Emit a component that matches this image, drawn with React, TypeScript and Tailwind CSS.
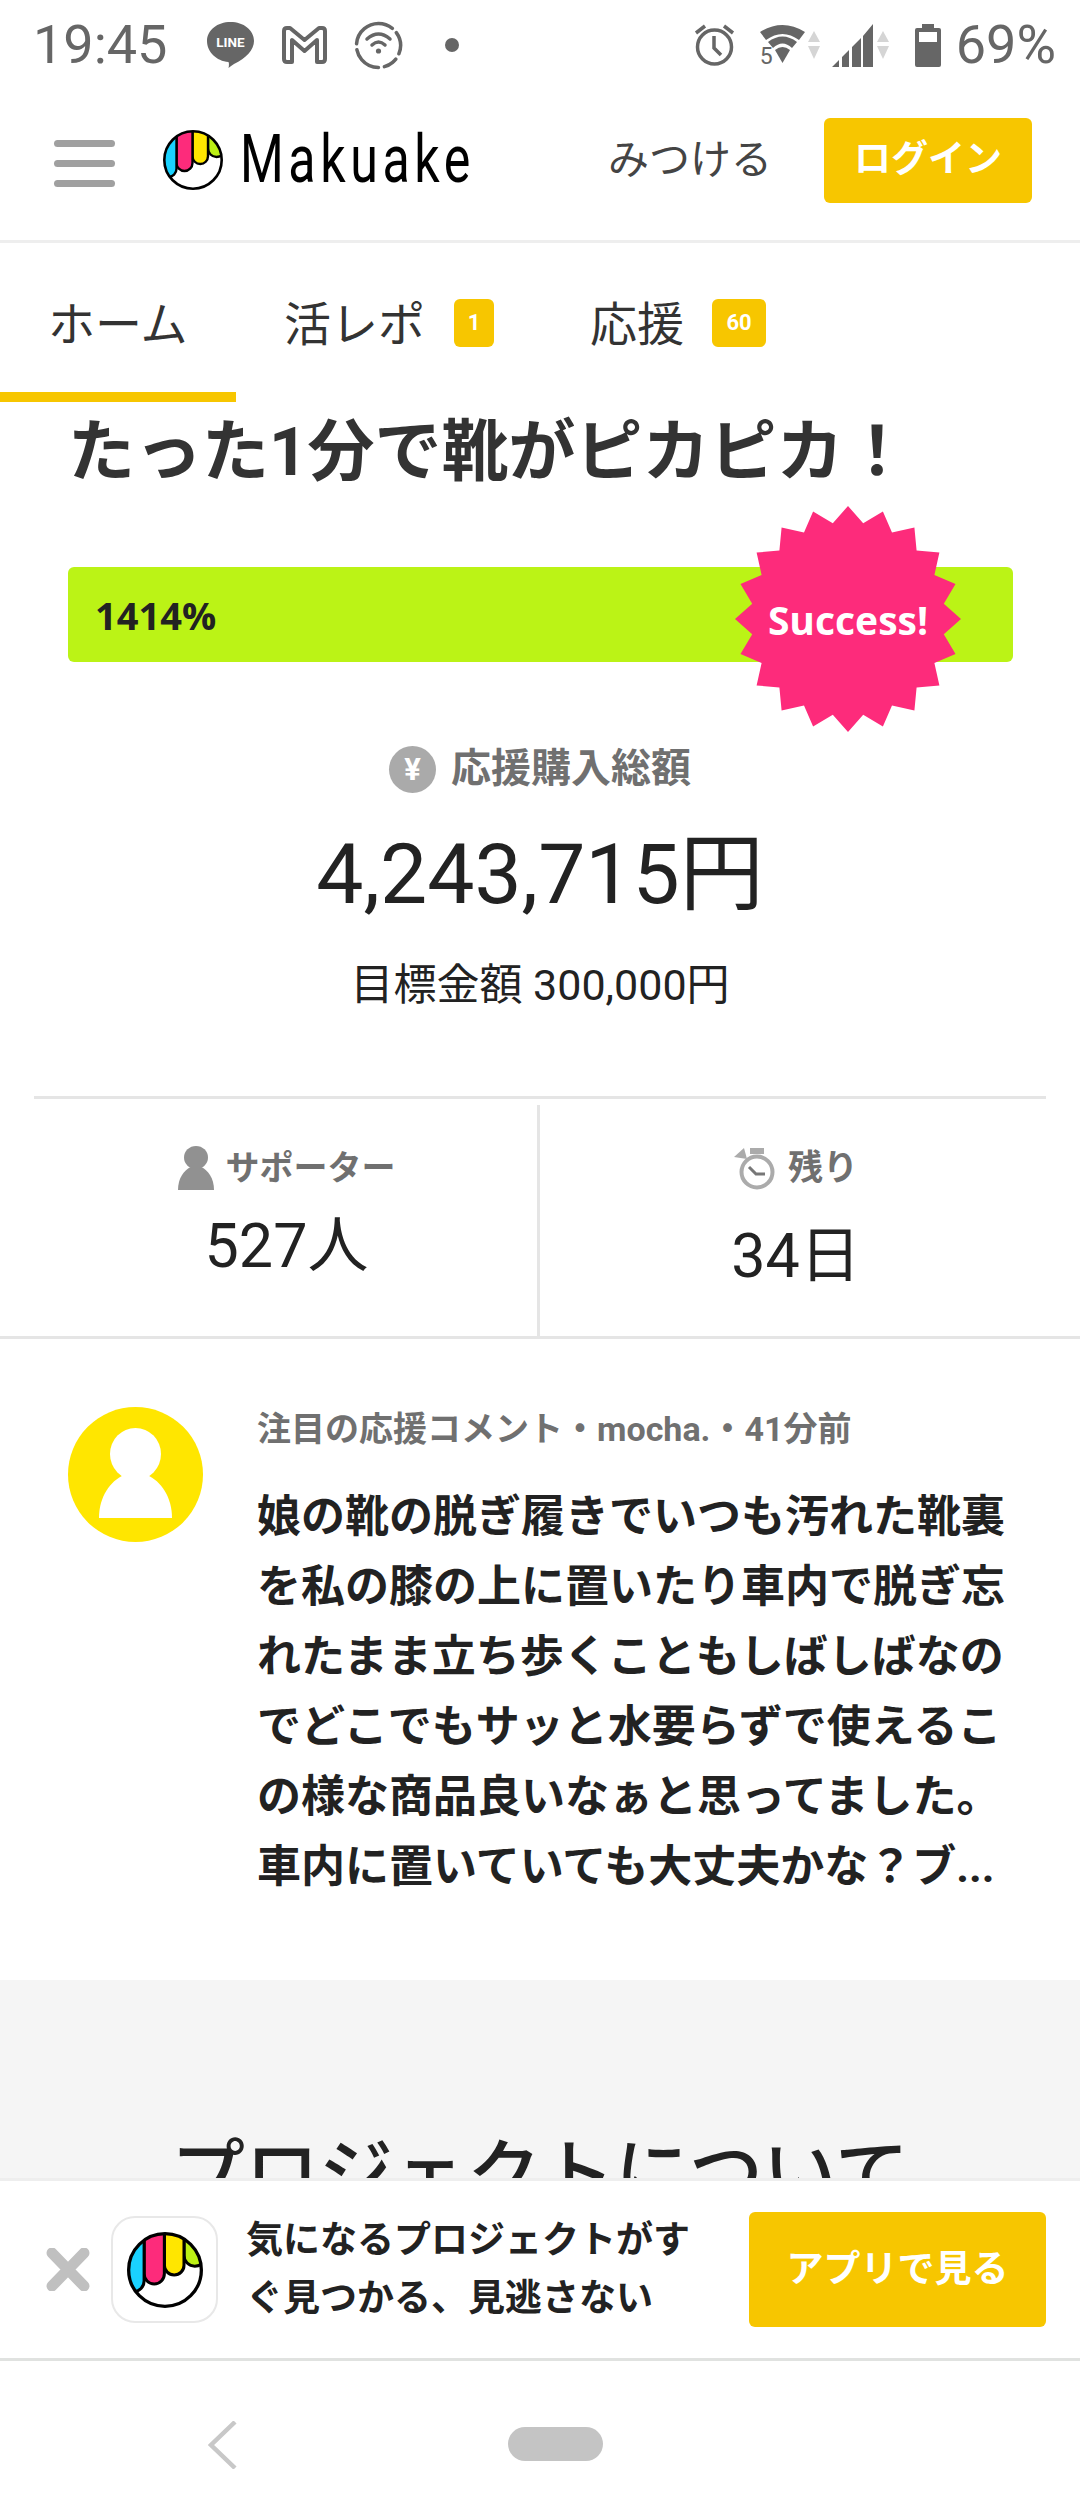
const FONT = 'font-["Roboto","Noto_Sans_CJK_JP",sans-serif]';

// 20-point starburst behind the "Success!" label
function burstPoints(cx: number, cy: number, outer: number, inner: number) {
  const pts: string[] = [];
  for (let i = 0; i < 40; i++) {
    const r = i % 2 === 0 ? outer : inner;
    const a = (i * 9 * Math.PI) / 180;
    pts.push(`${(cx + r * Math.sin(a)).toFixed(1)},${(cy - r * Math.cos(a)).toFixed(1)}`);
  }
  return pts.join(' ');
}

function stripe(x0: number, x1: number, bottom: number) {
  const r = (x1 - x0) / 2;
  return `M${x0} -6 V${bottom - r} A${r} ${r} 0 0 0 ${x1} ${bottom - r} V-6 Z`;
}

function LogoMark({ size, id }: { size: number; id: string }) {
  return (
    <svg width={size} height={size} viewBox="0 0 60 60" className="shrink-0">
      <defs>
        <clipPath id={id}>
          <circle cx="30" cy="30" r="28.5" />
        </clipPath>
      </defs>
      <g clipPath={`url(#${id})`}>
        <circle cx="30" cy="30" r="29" fill="#fff" />
        <path d={stripe(45, 62, 27)} fill="#bcf015" stroke="#000" strokeWidth="2.4" />
        <path d={stripe(29.5, 45, 34)} fill="#ffe600" stroke="#000" strokeWidth="2.4" />
        <path d={stripe(13.5, 29.5, 41)} fill="#fd2b7b" stroke="#000" strokeWidth="2.4" />
        <path d={stripe(-3, 13.5, 47)} fill="#1ad2ff" stroke="#000" strokeWidth="2.4" />
      </g>
      <circle cx="30" cy="30" r="28.7" fill="none" stroke="#000" strokeWidth="2.6" />
    </svg>
  );
}

function StatusLeftIcons() {
  return (
    <>
      <svg width="47" height="46" viewBox="0 0 47 46" className="ml-[44px]">
        <path d="M23.5 0C36.5 0 47 8 47 19c0 9-8 17-20 23-2 1.200-4 2.500-5.500 4 .5-2 .7-4.500 0-6C9.500 39 0 30 0 19 0 8 10.500 0 23.500 0Z" fill="#666" />
        <text x="23.500" y="25" textAnchor="middle" fontSize="13.500" fontWeight="700" fill="#fff" fontFamily="Roboto">LINE</text>
      </svg>
      <svg width="47" height="38" viewBox="0 0 47 38" className="ml-[27px]">
        <path d="M3 5 Q3 2 6 2 H9 L23.500 14 L38 2 H41 Q44 2 44 5 V33 Q44 36 41 36 H36 V14 L23.500 25 L11 14 V36 H6 Q3 36 3 33 Z" fill="none" stroke="#666" strokeWidth="4" strokeLinejoin="round" />
      </svg>
      <svg width="49" height="49" viewBox="0 0 49 49" className="ml-[26px]">
        <circle cx="24.500" cy="24.500" r="22" fill="none" stroke="#666" strokeWidth="3.500" strokeDasharray="30 6 22 6 14 6 30 6" strokeLinecap="round" transform="rotate(-130 24.500 24.500)" />
        <path d="M13 18 Q24.500 8 36 18" fill="none" stroke="#666" strokeWidth="3.500" strokeLinecap="round" />
        <path d="M18 24 Q24.500 18 31 24" fill="none" stroke="#666" strokeWidth="3.500" strokeLinecap="round" />
        <circle cx="24.500" cy="30" r="2.600" fill="#666" />
      </svg>
      <span className="ml-[42px] h-[14px] w-[14px] rounded-full bg-[#666]" />
    </>
  );
}

function Arrows({ className }: { className: string }) {
  return (
    <svg width="12" height="28" viewBox="0 0 12 28" className={className}>
      <path d="M6 0 L12 11 H0 Z" fill="#d5d5d5" />
      <path d="M0 15 H12 L6 28 Z" fill="#d5d5d5" />
    </svg>
  );
}

function StatusRightIcons() {
  return (
    <>
      <svg width="41" height="42" viewBox="0 0 41 42">
        <circle cx="20.500" cy="23" r="17" fill="none" stroke="#666" strokeWidth="3.500" />
        <path d="M20 12 V24 L27 31" fill="none" stroke="#666" strokeWidth="3.500" />
        <path d="M2 9 L11 2 M39 9 L30 2" stroke="#666" strokeWidth="3.500" />
      </svg>
      <div className="relative ml-[25px] h-[42px] w-[45px]">
        <svg width="45" height="40" viewBox="0 0 45 40" className="absolute left-0 top-0">
          <path d="M0 8 Q22.500 -6 45 8 L39 16 Q22.500 4 6 16 Z" fill="#666" />
          <path d="M8 18 Q22.500 7 37 18 L32 24 Q22.500 15 13 24 Z" fill="#666" />
          <path d="M15 26 Q22.500 20 30 26 L22.500 39 Z" fill="#666" />
        </svg>
        <span className={`${FONT} absolute bottom-[-4px] left-0 text-[23px] leading-[26px] text-[#666]`}>5</span>
      </div>
      <Arrows className="ml-[3px]" />
      <svg width="41" height="43" viewBox="0 0 41 43" className="ml-[12px]">
        <path d="M0 43 L7 36 V43 Z M10 33 L17 26 V43 H10 Z M20 23 L29 14 V43 H20 Z M31 12 L41 0 V43 H31 Z" fill="#666" />
      </svg>
      <Arrows className="ml-[4px]" />
      <svg width="26" height="43" viewBox="0 0 26 43" className="ml-[26px]">
        <path d="M7 0 H19 V4 H24 Q26 4 26 6 V41 Q26 43 24 43 H2 Q0 43 0 41 V6 Q0 4 2 4 H7 Z" fill="#666" />
        <rect x="4" y="8" width="18" height="10" fill="#fff" />
      </svg>
      <span className="ml-[15px] text-[54px] leading-none text-[#666]">69%</span>
    </>
  );
}

function PersonIcon() {
  return (
    <svg width="36" height="44" viewBox="0 0 36 44" className="shrink-0">
      <ellipse cx="18" cy="11.500" rx="12" ry="11.500" fill="#919191" />
      <path d="M0 44 C0 32 6 24 13 21 H23 C30 24 36 32 36 44 Z" fill="#919191" />
    </svg>
  );
}

function TimerIcon() {
  return (
    <svg width="42" height="43" viewBox="0 0 42 43" className="shrink-0">
      <circle cx="23" cy="25" r="15.500" fill="none" stroke="#ababab" strokeWidth="4" />
      <path d="M0 10 L10 1 L13 12 Z" fill="#ababab" />
      <rect x="16" y="1" width="14" height="6" fill="#ababab" />
      <path d="M15 20 L22 27 H31" fill="none" stroke="#777" strokeWidth="3" />
    </svg>
  );
}

export default function App() {
  return (
    <div className={`${FONT} flex h-[2520px] w-[1080px] flex-col overflow-hidden bg-white text-[#222]`}>
      {/* android status bar */}
      <div className="flex h-[90px] shrink-0 items-center pl-[33px] pr-[24px]">
        <span className="w-[130px] whitespace-nowrap text-[54px] leading-none text-[#666]">19:45</span>
        <StatusLeftIcons />
        <div className="ml-auto flex items-center">
          <StatusRightIcons />
        </div>
      </div>

      <header className="flex h-[153px] shrink-0 items-center border-b-[3px] border-[#eee] pb-[10px] pl-[54px] pr-[48px]">
        <div className="mt-[7px] flex w-[61px] flex-col gap-[13px]">
          <span className="h-[7px] rounded-full bg-[#a0a0a0]" />
          <span className="h-[7px] rounded-full bg-[#a0a0a0]" />
          <span className="h-[7px] rounded-full bg-[#a0a0a0]" />
        </div>
        <div className="ml-[48px]">
          <LogoMark size={60} id="logo-head" />
        </div>
        <span className="ml-[17px] w-[227px] origin-left scale-x-[0.76] whitespace-nowrap font-['Roboto'] text-[66px] leading-none tracking-[6px] text-black">
          Makuake
        </span>
        <span className="ml-auto text-[41px] leading-none text-[#444]">みつける</span>
        <button className="ml-[52px] h-[85px] w-[208px] rounded-[6px] bg-[#f7c600] text-[37px] font-bold text-white">
          ログイン
        </button>
      </header>

      <nav className="flex h-[159px] shrink-0 items-center text-[47px] text-[#333]">
        <div className="flex h-full w-[236px] items-center border-b-[10px] border-[#f7c600] pl-[48px] pt-[16px]">
          ホーム
        </div>
        <span className="ml-[48px] mt-[6px]">活レポ</span>
        <span className="ml-[29px] flex h-[48px] w-[40px] items-center justify-center rounded-[6px] bg-[#f7c600] text-[22px] font-bold text-white">
          1
        </span>
        <span className="ml-[96px] mt-[6px]">応援</span>
        <span className="ml-[28px] flex h-[48px] w-[54px] items-center justify-center rounded-[6px] bg-[#f7c600] text-[22px] font-bold text-white">
          60
        </span>
      </nav>

      <main className="flex flex-1 flex-col">
        <h1 className="h-[100px] shrink-0 whitespace-nowrap pl-[68px] text-[67px] font-bold leading-[100px] text-[#333]">
          たった1分で靴がピカピカ！
        </h1>

        <div className="relative ml-[68px] mt-[65px] flex h-[95px] w-[945px] shrink-0 items-center rounded-[6px] bg-[#bbf316] pl-[27px]">
          <span className="font-['Open_Sans'] text-[38px] font-bold leading-none text-[#222]">1414%</span>
          <div className="absolute left-[667px] top-[-61px] flex h-[226px] w-[226px] items-center justify-center">
            <svg width="226" height="226" viewBox="0 0 226 226" className="absolute inset-0">
              <polygon points={burstPoints(113, 113, 113, 97)} fill="#fd2b7b" />
            </svg>
            <span className="relative font-['Open_Sans'] text-[39px] font-bold leading-none text-white">Success!</span>
          </div>
        </div>

        <div className="mt-[83px] flex h-[48px] shrink-0 items-center justify-center">
          <span className="flex h-[47px] w-[47px] items-center justify-center rounded-full bg-[#aaa] text-[31px] font-bold leading-none text-white">
            ¥
          </span>
          <span className="ml-[15px] text-[40px] font-bold leading-none text-[#707070]">応援購入総額</span>
        </div>
        <p className="mt-[32px] h-[100px] shrink-0 text-center text-[84px] leading-[100px]">4,243,715円</p>
        <p className="mt-[30px] h-[60px] shrink-0 text-center text-[43px] leading-[60px]">目標金額 300,000円</p>

        <div className="mx-[34px] mt-[81px] h-[3px] shrink-0 bg-[#e5e5e5]" />

        <div className="mt-[6px] flex h-[234px] shrink-0 border-b-[3px] border-[#e5e5e5]">
          <div className="flex w-[540px] flex-col items-center border-r-[3px] border-[#e5e5e5] pl-[36px] pt-[41px]">
            <div className="flex h-[44px] items-center gap-[12px]">
              <PersonIcon />
              <span className="text-[34px] font-bold leading-none text-[#707070]">サポーター</span>
            </div>
            <span className="mt-[21px] text-[61px] leading-[70px]">527人</span>
          </div>
          <div className="flex flex-1 flex-col items-center pr-[28px] pt-[41px]">
            <div className="flex h-[44px] items-center gap-[12px]">
              <TimerIcon />
              <span className="text-[35px] font-bold leading-none text-[#707070]">残り</span>
            </div>
            <span className="mt-[31px] text-[61px] leading-[70px]">34日</span>
          </div>
        </div>

        <section className="flex h-[641px] shrink-0 pl-[68px] pr-[70px] pt-[68px]">
          <svg width="135" height="135" viewBox="0 0 135 135" className="shrink-0">
            <circle cx="67.500" cy="67.500" r="67.500" fill="#ffe600" />
            <ellipse cx="67.500" cy="47" rx="25.500" ry="26" fill="#fff" />
            <path d="M31 111 C31 90 42 74 56 68 H79 C93 74 104 90 104 111 Z" fill="#fff" />
          </svg>
          <div className="ml-[54px] min-w-0 flex-1">
            <p className="whitespace-nowrap text-[34px] font-bold leading-[44px] text-[#707070]">
              注目の応援コメント・mocha.・41分前
            </p>
            <p className="mt-[31px] text-[44px] font-bold leading-[70px]">
              娘の靴の脱ぎ履きでいつも汚れた靴裏を私の膝の上に置いたり車内で脱ぎ忘れたまま立ち歩くこともしばしばなのでどこでもサッと水要らずで使えるこの様な商品良いなぁと思ってました。車内に置いていても大丈夫かな？ブ...
            </p>
          </div>
        </section>

        <section className="h-[198px] shrink-0 overflow-hidden bg-[#f5f5f5] pt-[145px] text-center">
          <h2 className="whitespace-nowrap text-[74px] font-medium leading-[100px]">プロジェクトについて</h2>
        </section>

        <div className="flex h-[183px] shrink-0 items-center border-y-[3px] border-b-[#e0e2e0] border-t-[#eee] pl-[46px] pr-[34px]">
          <svg width="44" height="43" viewBox="0 0 44 43" className="shrink-0">
            <path d="M6 5 L38 38 M38 5 L6 38" stroke="#c0c0c0" strokeWidth="11" strokeLinecap="round" />
          </svg>
          <div className="ml-[21px] flex h-[107px] w-[107px] shrink-0 items-center justify-center rounded-[24px] border-2 border-[#e8e8e8]">
            <LogoMark size={76} id="logo-app" />
          </div>
          <p className="ml-[28px] w-[450px] text-[37px] font-bold leading-[58px]">
            気になるプロジェクトがすぐ見つかる、見逃さない
          </p>
          <button className="ml-auto h-[115px] w-[297px] rounded-[6px] bg-[#f7c600] text-[37px] font-bold text-white">
            アプリで見る
          </button>
        </div>

        <div className="flex h-[159px] shrink-0 items-center pl-[208px] pt-[7px]">
          <svg width="29" height="48" viewBox="0 0 29 48" className="mt-[2px] shrink-0">
            <path d="M27 1 L3 24 L27 47" fill="none" stroke="#c8c8c8" strokeWidth="4.500" />
          </svg>
          <span className="ml-[271px] h-[34px] w-[95px] rounded-[17px] bg-[#c4c4c4]" />
        </div>
      </main>
    </div>
  );
}
